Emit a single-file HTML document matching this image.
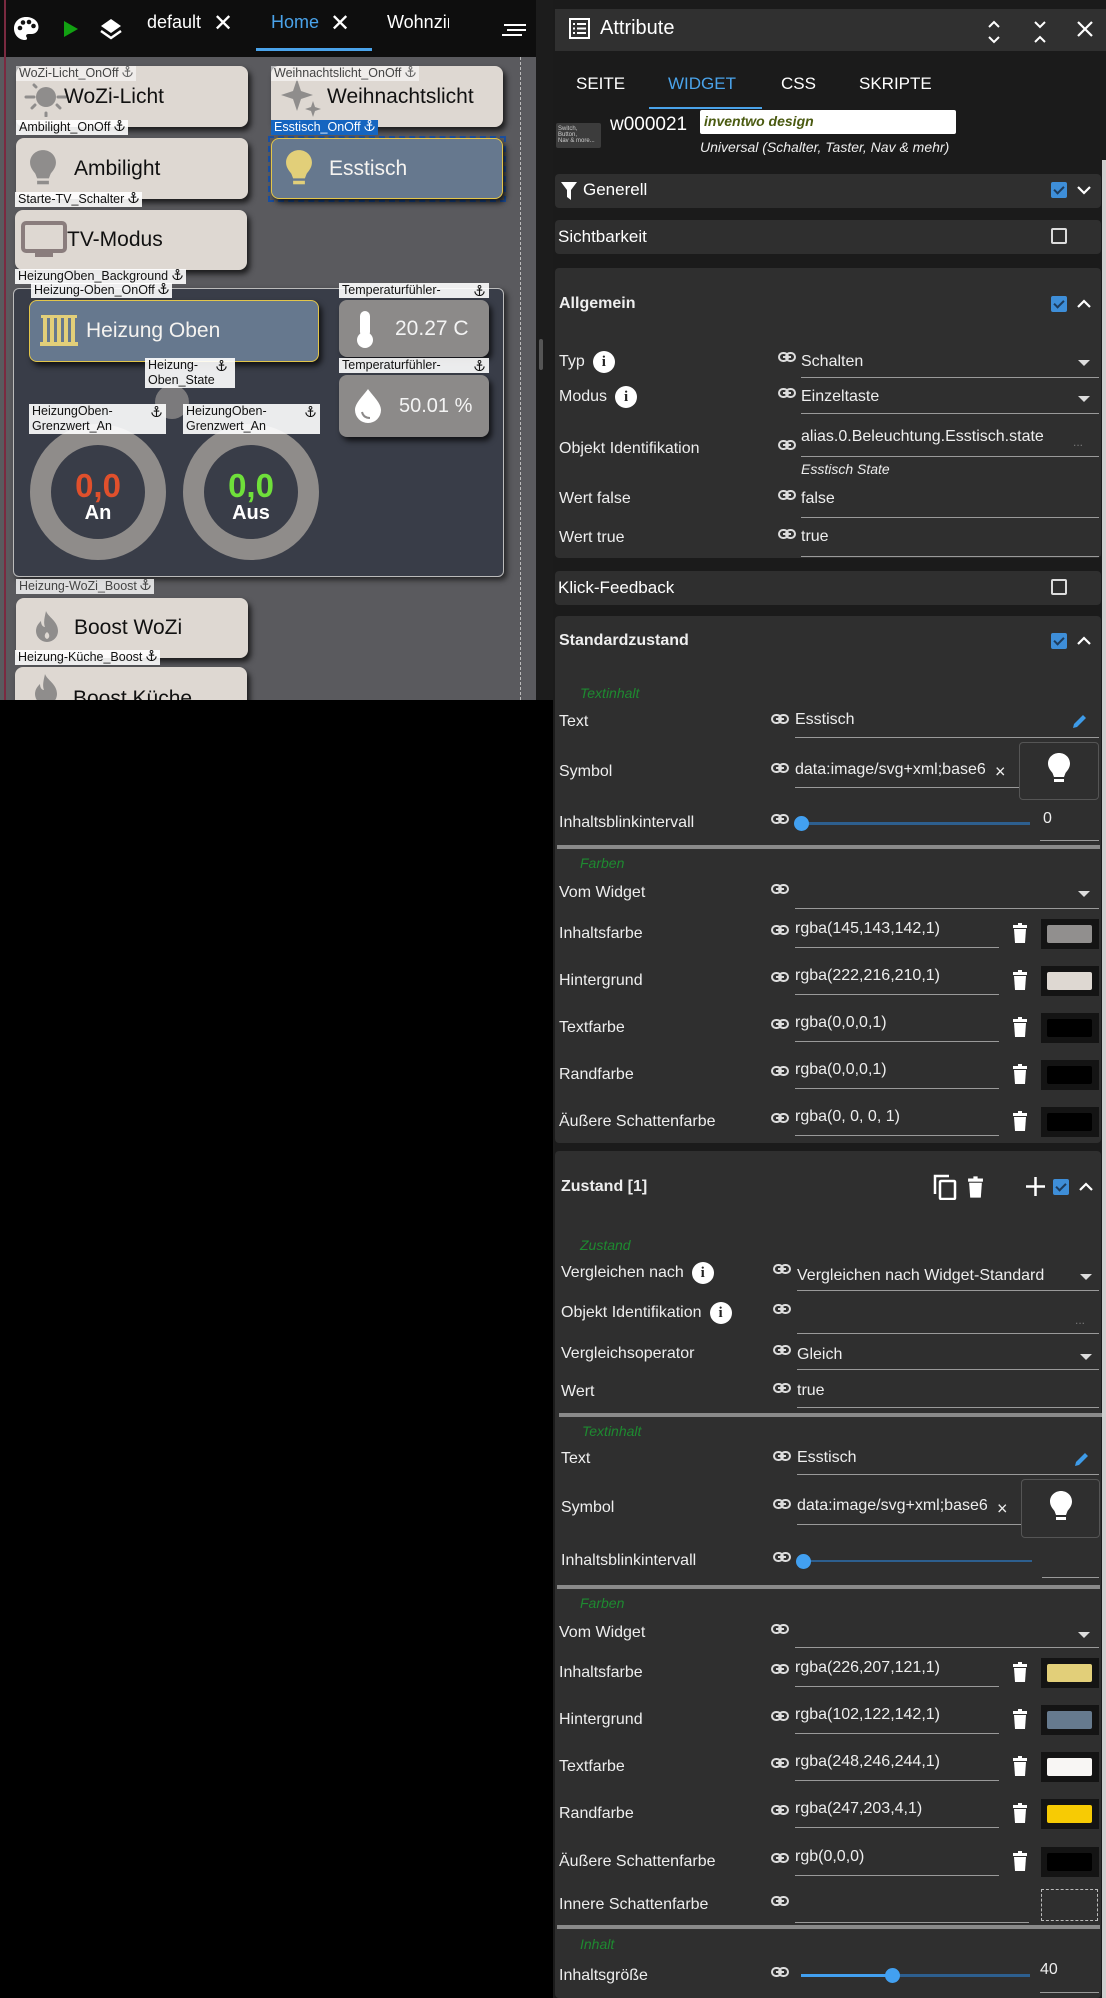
<!DOCTYPE html>
<html><head><meta charset="utf-8">
<style>
*{margin:0;padding:0;box-sizing:border-box}
body{width:1106px;height:1998px;background:#000;position:relative;overflow:hidden;font-family:"Liberation Sans",sans-serif;color:#fff}
.a{position:absolute}
.btn{position:absolute;background:#ded8d2;border-radius:8px;box-shadow:3px 4px 6px rgba(0,0,0,.7);color:#111;font-size:21px;display:flex;align-items:center}
.lbl{position:absolute;background:rgba(255,255,255,.9);color:#111;font-size:12.5px;line-height:15px;padding:0 3px;white-space:nowrap}
.lbl.t{background:rgba(255,255,255,.55);color:#444}
.blk{position:absolute;left:555px;width:546px;background:#2f2f2f;border-radius:4px}
.L{position:absolute;left:559px;font-size:16px;color:#eee;transform:translateY(-50%);white-space:nowrap}
.V{position:absolute;font-size:16px;color:#eee;transform:translateY(-50%);white-space:nowrap}
.ul{position:absolute;height:1px;background:#9a9a9a}
.lk{position:absolute;width:18px;height:10px}
.ar{position:absolute;left:1078px;width:0;height:0;border-left:6px solid transparent;border-right:6px solid transparent;border-top:6px solid #ddd}
.cb{position:absolute;width:16px;height:16px;background:#3e8ed8;border-radius:2px}
.cb:after{content:"";position:absolute;left:5px;top:2px;width:4px;height:8px;border:solid #1d3b5c;border-width:0 2px 2px 0;transform:rotate(45deg)}
.cbe{position:absolute;width:16px;height:16px;border:2px solid #ddd;border-radius:2px}
.grn{position:absolute;left:580px;font-size:14px;font-style:italic;color:#1e8a30;transform:translateY(-50%)}
.sep{position:absolute;left:557px;width:543px;height:4px;background:#8a8a8a}
.info{display:inline-block;width:22px;height:22px;border-radius:50%;background:#fff;color:#222;font-weight:bold;font-size:15px;text-align:center;line-height:22px;vertical-align:middle;margin-left:8px;font-family:"Liberation Serif",serif}
.sw{position:absolute;left:1041px;width:58px;height:30px;background:#141414}
.sw i{position:absolute;left:6px;top:6px;width:45px;height:18px;border-radius:2px}
.tr{position:absolute;left:1012px;width:16px;height:20px}
.h{font-weight:bold;font-size:16px}
</style></head><body>
<svg width="0" height="0" style="position:absolute"><defs>
<symbol id="lnk" viewBox="0 0 18 10"><rect x="1" y="1" width="9" height="8" rx="4" fill="none" stroke="#ddd" stroke-width="2"/><rect x="8" y="1" width="9" height="8" rx="4" fill="none" stroke="#ddd" stroke-width="2"/><rect x="5" y="4" width="8" height="2" fill="#ddd"/></symbol>
<symbol id="trash" viewBox="0 0 16 20"><rect x="1" y="2" width="14" height="3" fill="#fff"/><rect x="6" y="0" width="4" height="2" fill="#fff"/><path d="M2 6h12l-1 14H3z" fill="#fff"/></symbol>
<symbol id="bulb" viewBox="0 0 24 34"><path d="M12 1C6 1 1 5.5 1 11.5c0 4 2.5 7 4.5 9.5L7 25h10l1.5-4c2-2.5 4.5-5.5 4.5-9.5C23 5.5 18 1 12 1z"/><rect x="7" y="27" width="10" height="3"/></symbol>
<symbol id="anc" viewBox="0 0 12 12"><circle cx="6" cy="2" r="1.5" fill="none" stroke="currentColor"/><path d="M6 3.5v8M3 5.5h6M1 7c0 3 3 4.5 5 4.5s5-1.5 5-4.5" fill="none" stroke="currentColor" stroke-width="1.2"/></symbol>
</defs></svg>

<!-- LEFT EDITOR -->
<div class="a" style="left:0;top:0;width:536px;height:700px;background:#5a5a5e"></div>
<div class="a" style="left:0;top:0;width:536px;height:57px;background:#0e0e0e"></div>
<div class="a" style="left:4px;top:0;width:2px;height:700px;background:#7a2a40"></div>
<div class="a" style="left:536px;top:0;width:17px;height:700px;background:#1c1c1c"></div>
<div class="a" style="left:539px;top:339px;width:4px;height:31px;background:#555;border-radius:2px"></div>
<div class="a" style="left:520px;top:57px;width:0;height:643px;border-left:1px dashed #bbb"></div>
<svg class="a" style="left:13px;top:16px" width="27" height="25" viewBox="0 0 27 25"><path d="M13 1C6 1 1 6 1 12.5S6 24 12 24c2 0 2.5-1.5 1.5-3-1-1.5 0-3 2-3h3c4 0 7-3 7-7C25.5 5 20 1 13 1z" fill="#fff"/><circle cx="7" cy="12" r="2.3" fill="#111"/><circle cx="10" cy="6.5" r="2.3" fill="#111"/><circle cx="16" cy="6" r="2.3" fill="#111"/><circle cx="20.5" cy="10" r="2.3" fill="#111"/></svg>
<div class="a" style="left:64px;top:21px;border-left:14px solid #12a012;border-top:8px solid transparent;border-bottom:8px solid transparent"></div>
<svg class="a" style="left:99px;top:17px" width="24" height="24" viewBox="0 0 24 24"><path d="M12 2L2 9l10 7 10-7z" fill="#fff"/><path d="M2 14l10 7 10-7" fill="none" stroke="#fff" stroke-width="2.5"/></svg>
<div class="a" style="left:147px;top:12px;font-size:18px;color:#fff">default</div>
<div class="a" style="left:213px;top:9px;font-size:24px;color:#fff">✕</div>
<div class="a" style="left:271px;top:12px;font-size:18px;color:#4aa3ea">Home</div>
<div class="a" style="left:330px;top:9px;font-size:24px;color:#fff">✕</div>
<div class="a" style="left:256px;top:48px;width:116px;height:3px;background:#4aa3ea"></div>
<div class="a" style="left:387px;top:12px;font-size:18px;color:#fff;width:62px;overflow:hidden;white-space:nowrap">Wohnzimmer</div>
<div class="a" style="left:504px;top:24px;width:22px;height:2px;background:#fff"></div>
<div class="a" style="left:507px;top:29px;width:19px;height:2px;background:#fff"></div>
<div class="a" style="left:502px;top:34px;width:20px;height:2px;background:#fff"></div>

<div class="btn" style="left:16px;top:66px;width:232px;height:61px"><svg style="margin-left:6px" width="48" height="40" viewBox="0 0 48 40"><circle cx="24" cy="20" r="10" fill="#8f8d8c"/><g stroke="#8f8d8c" stroke-width="3" stroke-linecap="round"><path d="M4 20h8M36 20h8M24 36v3M10 31l3-3M38 31l-3-3M12 8l2 2"/></g></svg><span style="margin-left:-6px">WoZi-Licht</span></div>
<div class="btn" style="left:271px;top:66px;width:232px;height:61px"><svg style="margin-left:6px" width="48" height="44" viewBox="0 0 48 44"><path d="M20 4l4 12 12 4-12 4-4 12-4-12-12-4 12-4z" fill="#8f8d8c"/><path d="M36 26l2 6 6 2-6 2-2 6-2-6-6-2 6-2z" fill="#8f8d8c"/></svg><span style="margin-left:2px">Weihnachtslicht</span></div>
<div class="lbl t" style="left:16px;top:66px">WoZi-Licht_OnOff <svg width="11" height="11" style="color:#666"><use href="#anc"/></svg></div>
<div class="lbl t" style="left:271px;top:66px">Weihnachtslicht_OnOff <svg width="11" height="11" style="color:#666"><use href="#anc"/></svg></div>

<div class="btn" style="left:16px;top:138px;width:232px;height:61px"><svg style="margin-left:12px;fill:#8f8d8c" width="30" height="40"><use href="#bulb"/></svg><span style="margin-left:16px">Ambilight</span></div>
<div class="lbl" style="left:16px;top:120px">Ambilight_OnOff <svg width="11" height="11"><use href="#anc"/></svg></div>
<div class="a" style="left:268px;top:136px;width:238px;height:66px;border:2px dashed #1a4fa0"></div>
<div class="btn" style="left:271px;top:138px;width:232px;height:61px;background:#66788e;border:1px solid #e3c64a;color:#f5f3f0"><svg style="margin-left:12px;fill:#e2cf79" width="30" height="40"><use href="#bulb"/></svg><span style="margin-left:15px">Esstisch</span></div>
<div class="lbl" style="left:271px;top:120px;background:#1565c0;color:#fff">Esstisch_OnOff <svg width="11" height="11"><use href="#anc"/></svg></div>

<div class="btn" style="left:15px;top:210px;width:232px;height:60px"><svg style="margin-left:6px" width="46" height="38" viewBox="0 0 46 38"><rect x="2" y="2" width="42" height="28" rx="3" fill="none" stroke="#8a7d7d" stroke-width="4"/><rect x="14" y="31" width="18" height="5" fill="#8a7d7d"/></svg><span>TV-Modus</span></div>
<div class="lbl" style="left:15px;top:192px">Starte-TV_Schalter <svg width="11" height="11"><use href="#anc"/></svg></div>

<div class="a" style="left:13px;top:288px;width:491px;height:289px;background:#393d48;border:1px solid #bbb;border-radius:6px;box-shadow:3px 3px 6px rgba(0,0,0,.6)"></div>
<div class="lbl" style="left:15px;top:269px">HeizungOben_Background <svg width="11" height="11"><use href="#anc"/></svg></div>
<div class="btn" style="left:29px;top:300px;width:290px;height:62px;background:#66788e;border:1px solid #e3c64a;color:#f5f3f0"><svg style="margin-left:10px" width="38" height="38" viewBox="0 0 38 38"><g fill="#e2cf79"><rect x="3" y="4" width="4" height="28"/><rect x="10" y="4" width="4" height="28"/><rect x="17" y="4" width="4" height="28"/><rect x="24" y="4" width="4" height="28"/><rect x="31" y="4" width="4" height="28"/><rect x="0" y="30" width="38" height="4"/><rect x="1" y="3" width="36" height="3"/></g></svg><span style="margin-left:8px">Heizung Oben</span></div>
<div class="lbl" style="left:31px;top:283px">Heizung-Oben_OnOff <svg width="11" height="11"><use href="#anc"/></svg></div>

<div class="btn" style="left:339px;top:300px;width:150px;height:57px;background:#8c8a89;color:#f4f4f4;font-size:21px"><svg style="margin-left:16px" width="20" height="40" viewBox="0 0 20 40"><rect x="5" y="2" width="10" height="26" rx="5" fill="#fff"/><circle cx="10" cy="31" r="8" fill="#fff"/></svg><span style="margin-left:20px">20.27 C</span></div>
<div class="lbl" style="left:339px;top:283px;width:150px">Temperaturfühler- <svg width="11" height="11" style="position:absolute;right:4px;top:2px"><use href="#anc"/></svg></div>
<div class="btn" style="left:339px;top:375px;width:150px;height:62px;background:#8c8a89;color:#f4f4f4;font-size:20px"><svg style="margin-left:14px" width="30" height="36" viewBox="0 0 30 36"><path d="M15 1C10 8 2 15 2 22a13 13 0 0 0 26 0C28 15 20 8 15 1z" fill="#fff"/><path d="M9 24c1 4 4 6 8 6" stroke="#8c8a89" stroke-width="2" fill="none"/></svg><span style="margin-left:16px">50.01 %</span></div>
<div class="lbl" style="left:339px;top:358px;width:150px">Temperaturfühler- <svg width="11" height="11" style="position:absolute;right:4px;top:2px"><use href="#anc"/></svg></div>
<div class="a" style="left:155px;top:385px;width:34px;height:34px;border-radius:50%;background:#8c8a89;opacity:.8"></div>
<div class="lbl" style="left:145px;top:358px;width:90px;height:30px;white-space:normal">Heizung-<br>Oben_State<svg width="11" height="11" style="position:absolute;right:8px;top:2px"><use href="#anc"/></svg></div>

<div class="a" style="left:30px;top:424px;width:136px;height:136px;border-radius:50%;border:21px solid #8f8c8a;background:#393d48"></div>
<div class="a" style="left:183px;top:424px;width:136px;height:136px;border-radius:50%;border:21px solid #8f8c8a;background:#393d48"></div>
<div class="a" style="left:30px;top:470px;width:136px;text-align:center;font-weight:bold;font-size:33px;color:#e0502c;line-height:32px">0,0</div>
<div class="a" style="left:30px;top:502px;width:136px;text-align:center;font-weight:bold;font-size:20px;color:#fff">An</div>
<div class="a" style="left:183px;top:470px;width:136px;text-align:center;font-weight:bold;font-size:33px;color:#6fe03a;line-height:32px">0,0</div>
<div class="a" style="left:183px;top:502px;width:136px;text-align:center;font-weight:bold;font-size:20px;color:#fff">Aus</div>
<div class="lbl" style="left:29px;top:404px;width:137px;height:30px;white-space:normal">HeizungOben-<br>Grenzwert_An<svg width="11" height="11" style="position:absolute;right:4px;top:2px"><use href="#anc"/></svg></div>
<div class="lbl" style="left:183px;top:404px;width:137px;height:30px;white-space:normal">HeizungOben-<br>Grenzwert_An<svg width="11" height="11" style="position:absolute;right:4px;top:2px"><use href="#anc"/></svg></div>

<div class="btn" style="left:16px;top:598px;width:232px;height:60px"><svg style="margin-left:14px" width="34" height="36" viewBox="0 0 34 36"><path d="M16 1c2 6 12 10 12 20a11 11 0 0 1-22 0c0-5 3-8 5-10 0 4 2 6 4 6-2-5 0-11 1-16z" fill="#8f8d8c"/><path d="M17 22c-3 2-3 6 0 7 3-1 3-5 0-7z" fill="#ded8d2"/></svg><span style="margin-left:10px">Boost WoZi</span></div>
<div class="lbl t" style="left:16px;top:579px;background:rgba(255,255,255,.8)">Heizung-WoZi_Boost <svg width="11" height="11"><use href="#anc"/></svg></div>
<div class="btn" style="left:15px;top:667px;width:232px;height:60px;align-items:flex-start"><svg style="margin-left:14px;margin-top:6px" width="34" height="36" viewBox="0 0 34 36"><path d="M16 1c2 6 12 10 12 20a11 11 0 0 1-22 0c0-5 3-8 5-10 0 4 2 6 4 6-2-5 0-11 1-16z" fill="#8f8d8c"/></svg><span style="margin-left:10px;margin-top:20px">Boost Küche</span></div>
<div class="lbl" style="left:15px;top:650px">Heizung-Küche_Boost <svg width="11" height="11"><use href="#anc"/></svg></div>
<div class="a" style="left:0;top:700px;width:553px;height:1298px;background:#000"></div>

<!-- RIGHT PANEL -->
<div class="a" style="left:553px;top:0;width:553px;height:1998px;background:#1b1b1b"></div>
<div class="a" style="left:555px;top:9px;width:551px;height:42px;background:#303030"></div>
<svg class="a" style="left:569px;top:18px" width="21" height="21" viewBox="0 0 21 21"><rect x="1" y="1" width="19" height="19" fill="none" stroke="#fff" stroke-width="2"/><g fill="#fff"><rect x="4" y="5" width="2" height="2"/><rect x="8" y="5" width="9" height="2"/><rect x="4" y="9.5" width="2" height="2"/><rect x="8" y="9.5" width="9" height="2"/><rect x="4" y="14" width="2" height="2"/><rect x="8" y="14" width="9" height="2"/></g></svg>
<div class="a" style="left:600px;top:17px;font-size:20px">Attribute</div>
<svg class="a" style="left:987px;top:19px" width="14" height="26" viewBox="0 0 14 26"><path d="M2 8l5-5 5 5M2 18l5 5 5-5" fill="none" stroke="#fff" stroke-width="2"/></svg>
<svg class="a" style="left:1033px;top:19px" width="14" height="26" viewBox="0 0 14 26"><path d="M2 3l5 5 5-5M2 23l5-5 5 5" fill="none" stroke="#fff" stroke-width="2"/></svg>
<svg class="a" style="left:1076px;top:20px" width="18" height="18" viewBox="0 0 18 18"><path d="M2 2l14 14M16 2L2 16" stroke="#fff" stroke-width="2.2"/></svg>

<div class="a" style="left:576px;top:74px;font-size:17px">SEITE</div>
<div class="a" style="left:668px;top:74px;font-size:17px;color:#4aa3ea">WIDGET</div>
<div class="a" style="left:781px;top:74px;font-size:17px">CSS</div>
<div class="a" style="left:859px;top:74px;font-size:17px">SKRIPTE</div>
<div class="a" style="left:649px;top:107px;width:113px;height:2px;background:#4aa3ea"></div>
<div class="a" style="left:556px;top:123px;width:45px;height:25px;background:#3c3c3c;border-radius:2px;font-size:6px;line-height:6px;padding:3px 2px;color:#ccc">Switch,<br>Button,<br>Nav &amp; more...</div>
<div class="a" style="left:610px;top:114px;font-size:19px">w000021</div>
<div class="a" style="left:700px;top:110px;width:256px;height:24px;background:#fff;border-radius:2px;color:#4a5a10;font-style:italic;font-weight:bold;font-size:14px;padding:3px 4px">inventwo design</div>
<div class="a" style="left:700px;top:139px;font-size:14px;font-style:italic;color:#eee">Universal (Schalter, Taster, Nav &amp; mehr)</div>
<div class="a" style="left:1102px;top:160px;width:4px;height:1838px;background:#cfcfcf"></div>

<div class="blk" style="top:174px;height:34px"></div>
<svg class="a" style="left:561px;top:182px" width="16" height="18" viewBox="0 0 16 18"><path d="M0 0h16L10 8v10l-4-3V8z" fill="#fff"/></svg>
<div class="a" style="left:583px;top:180px;font-size:17px">Generell</div>
<div class="cb" style="left:1051px;top:182px"></div>
<svg class="a" style="left:1077px;top:185px" width="14" height="10" viewBox="0 0 14 10"><path d="M1 2l6 6 6-6" fill="none" stroke="#fff" stroke-width="2.2"/></svg>

<div class="blk" style="top:220px;height:34px"></div>
<div class="a" style="left:558px;top:227px;font-size:17px">Sichtbarkeit</div>
<div class="cbe" style="left:1051px;top:228px"></div>

<div class="blk" style="top:268px;height:290px"></div>
<div class="L h" style="top:304px">Allgemein</div>
<div class="cb" style="left:1051px;top:296px"></div>
<svg class="a" style="left:1077px;top:299px" width="14" height="10" viewBox="0 0 14 10"><path d="M1 8l6-6 6 6" fill="none" stroke="#fff" stroke-width="2.2"/></svg>
<div class="L" style="top:362px">Typ<span class="info">i</span></div>
<svg class="lk" style="left:778px;top:352px"><use href="#lnk"/></svg>
<div class="V" style="left:801px;top:362px">Schalten</div><div class="ar" style="top:360px"></div>
<div class="ul" style="left:801px;top:377px;width:298px"></div>
<div class="L" style="top:397px">Modus<span class="info">i</span></div>
<svg class="lk" style="left:778px;top:388px"><use href="#lnk"/></svg>
<div class="V" style="left:801px;top:397px">Einzeltaste</div><div class="ar" style="top:396px"></div>
<div class="ul" style="left:801px;top:413px;width:298px"></div>
<div class="L" style="top:449px">Objekt Identifikation</div>
<svg class="lk" style="left:778px;top:440px"><use href="#lnk"/></svg>
<div class="V" style="left:801px;top:437px">alias.0.Beleuchtung.Esstisch.state</div>
<div class="V" style="left:1073px;top:442px;color:#777;font-size:12px">...</div>
<div class="ul" style="left:801px;top:456px;width:298px"></div>
<div class="V" style="left:801px;top:469px;font-style:italic;font-size:14px">Esstisch State</div>
<div class="L" style="top:499px">Wert false</div>
<svg class="lk" style="left:778px;top:490px"><use href="#lnk"/></svg>
<div class="V" style="left:801px;top:499px">false</div>
<div class="ul" style="left:801px;top:517px;width:298px"></div>
<div class="L" style="top:538px">Wert true</div>
<svg class="lk" style="left:778px;top:529px"><use href="#lnk"/></svg>
<div class="V" style="left:801px;top:537px">true</div>
<div class="ul" style="left:801px;top:556px;width:298px"></div>

<div class="blk" style="top:571px;height:34px"></div>
<div class="a" style="left:558px;top:578px;font-size:17px">Klick-Feedback</div>
<div class="cbe" style="left:1051px;top:579px"></div>

<div class="blk" style="top:616px;height:527px"></div>
<div class="L h" style="top:641px">Standardzustand</div>
<div class="cb" style="left:1051px;top:633px"></div>
<svg class="a" style="left:1077px;top:636px" width="14" height="10" viewBox="0 0 14 10"><path d="M1 8l6-6 6 6" fill="none" stroke="#fff" stroke-width="2.2"/></svg>
<div class="grn" style="top:693px">Textinhalt</div>
<div class="L" style="top:722px">Text</div>
<svg class="lk" style="left:771px;top:714px"><use href="#lnk"/></svg>
<div class="V" style="left:795px;top:720px">Esstisch</div>
<svg class="a" style="left:1072px;top:713px" width="16" height="16" viewBox="0 0 16 16"><path d="M1 15l1-4 9-9 3 3-9 9z M12 1l3 3" fill="#3e9be8"/></svg>
<div class="ul" style="left:795px;top:737px;width:304px"></div>
<div class="L" style="top:772px">Symbol</div>
<svg class="lk" style="left:771px;top:763px"><use href="#lnk"/></svg>
<div class="V" style="left:795px;top:770px;width:190px;overflow:hidden">data:image/svg+xml;base64,PHN2</div>
<div class="V" style="left:995px;top:772px;font-size:18px">×</div>
<div class="ul" style="left:795px;top:787px;width:224px"></div>
<div class="a" style="left:1019px;top:742px;width:80px;height:58px;border:1px solid #555;border-radius:4px"></div>
<svg class="a" style="left:1047px;top:752px;fill:#fff" width="24" height="34"><use href="#bulb"/></svg>
<div class="L" style="top:823px">Inhaltsblinkintervall</div>
<svg class="lk" style="left:771px;top:814px"><use href="#lnk"/></svg>
<div class="a" style="left:801px;top:822px;width:229px;height:3px;background:#2d5f8f"></div>
<div class="a" style="left:794px;top:816px;width:15px;height:15px;border-radius:50%;background:#42a0f0"></div>
<div class="V" style="left:1043px;top:819px">0</div>
<div class="ul" style="left:1040px;top:840px;width:59px"></div>
<div class="sep" style="top:845px"></div>
<div class="grn" style="top:863px">Farben</div>
<div class="L" style="top:893px">Vom Widget</div>
<svg class="lk" style="left:771px;top:884px"><use href="#lnk"/></svg>
<div class="ar" style="top:891px"></div>
<div class="ul" style="left:795px;top:908px;width:304px"></div>

<div class="L" style="top:934px">Inhaltsfarbe</div><svg class="lk" style="left:771px;top:925px"><use href="#lnk"/></svg><div class="V" style="left:795px;top:929px">rgba(145,143,142,1)</div><div class="ul" style="left:795px;top:947px;width:204px"></div><svg class="tr" style="top:923px"><use href="#trash"/></svg><div class="sw" style="top:919px"><i style="background:#918f8e"></i></div>
<div class="L" style="top:981px">Hintergrund</div><svg class="lk" style="left:771px;top:972px"><use href="#lnk"/></svg><div class="V" style="left:795px;top:976px">rgba(222,216,210,1)</div><div class="ul" style="left:795px;top:994px;width:204px"></div><svg class="tr" style="top:970px"><use href="#trash"/></svg><div class="sw" style="top:966px"><i style="background:#ded8d2"></i></div>
<div class="L" style="top:1028px">Textfarbe</div><svg class="lk" style="left:771px;top:1019px"><use href="#lnk"/></svg><div class="V" style="left:795px;top:1023px">rgba(0,0,0,1)</div><div class="ul" style="left:795px;top:1041px;width:204px"></div><svg class="tr" style="top:1017px"><use href="#trash"/></svg><div class="sw" style="top:1013px"><i style="background:#000"></i></div>
<div class="L" style="top:1075px">Randfarbe</div><svg class="lk" style="left:771px;top:1066px"><use href="#lnk"/></svg><div class="V" style="left:795px;top:1070px">rgba(0,0,0,1)</div><div class="ul" style="left:795px;top:1088px;width:204px"></div><svg class="tr" style="top:1064px"><use href="#trash"/></svg><div class="sw" style="top:1060px"><i style="background:#000"></i></div>
<div class="L" style="top:1122px">Äußere Schattenfarbe</div><svg class="lk" style="left:771px;top:1113px"><use href="#lnk"/></svg><div class="V" style="left:795px;top:1117px">rgba(0, 0, 0, 1)</div><div class="ul" style="left:795px;top:1135px;width:204px"></div><svg class="tr" style="top:1111px"><use href="#trash"/></svg><div class="sw" style="top:1107px"><i style="background:#000"></i></div>

<div class="blk" style="top:1151px;height:847px"></div>
<div class="L h" style="left:561px;top:1187px">Zustand [1]</div>
<svg class="a" style="left:933px;top:1174px" width="24" height="26" viewBox="0 0 24 26"><path d="M2 20V2h14" fill="none" stroke="#fff" stroke-width="2.5"/><rect x="7" y="7" width="15" height="18" rx="1" fill="none" stroke="#fff" stroke-width="2.5"/></svg>
<svg class="a" style="left:967px;top:1176px" width="17" height="22"><use href="#trash"/></svg>
<svg class="a" style="left:1026px;top:1177px" width="19" height="19" viewBox="0 0 19 19"><path d="M9.5 0v19M0 9.5h19" stroke="#fff" stroke-width="2.5"/></svg>
<div class="cb" style="left:1053px;top:1179px"></div>
<svg class="a" style="left:1079px;top:1182px" width="14" height="10" viewBox="0 0 14 10"><path d="M1 8l6-6 6 6" fill="none" stroke="#fff" stroke-width="2.2"/></svg>
<div class="grn" style="top:1245px">Zustand</div>
<div class="L" style="left:561px;top:1273px">Vergleichen nach<span class="info">i</span></div>
<svg class="lk" style="left:773px;top:1264px"><use href="#lnk"/></svg>
<div class="V" style="left:797px;top:1276px">Vergleichen nach Widget-Standard</div><div class="ar" style="top:1274px;left:1080px"></div>
<div class="ul" style="left:797px;top:1290px;width:302px"></div>
<div class="L" style="left:561px;top:1313px">Objekt Identifikation<span class="info">i</span></div>
<svg class="lk" style="left:773px;top:1304px"><use href="#lnk"/></svg>
<div class="V" style="left:1075px;top:1320px;color:#777;font-size:12px">...</div>
<div class="ul" style="left:797px;top:1333px;width:302px"></div>
<div class="L" style="left:561px;top:1354px">Vergleichsoperator</div>
<svg class="lk" style="left:773px;top:1345px"><use href="#lnk"/></svg>
<div class="V" style="left:797px;top:1355px">Gleich</div><div class="ar" style="top:1354px;left:1080px"></div>
<div class="ul" style="left:797px;top:1369px;width:302px"></div>
<div class="L" style="left:561px;top:1392px">Wert</div>
<svg class="lk" style="left:773px;top:1383px"><use href="#lnk"/></svg>
<div class="V" style="left:797px;top:1391px">true</div>
<div class="ul" style="left:797px;top:1407px;width:302px"></div>
<div class="sep" style="top:1413px;left:559px"></div>
<div class="grn" style="left:582px;top:1431px">Textinhalt</div>
<div class="L" style="left:561px;top:1459px">Text</div>
<svg class="lk" style="left:773px;top:1451px"><use href="#lnk"/></svg>
<div class="V" style="left:797px;top:1458px">Esstisch</div>
<svg class="a" style="left:1074px;top:1451px" width="16" height="16" viewBox="0 0 16 16"><path d="M1 15l1-4 9-9 3 3-9 9z M12 1l3 3" fill="#3e9be8"/></svg>
<div class="ul" style="left:797px;top:1474px;width:302px"></div>
<div class="L" style="left:561px;top:1508px">Symbol</div>
<svg class="lk" style="left:773px;top:1499px"><use href="#lnk"/></svg>
<div class="V" style="left:797px;top:1506px;width:190px;overflow:hidden">data:image/svg+xml;base64,PHN2</div>
<div class="V" style="left:997px;top:1509px;font-size:18px">×</div>
<div class="ul" style="left:797px;top:1524px;width:224px"></div>
<div class="a" style="left:1021px;top:1479px;width:79px;height:59px;border:1px solid #555;border-radius:4px"></div>
<svg class="a" style="left:1049px;top:1490px;fill:#fff" width="24" height="34"><use href="#bulb"/></svg>
<div class="L" style="left:561px;top:1561px">Inhaltsblinkintervall</div>
<svg class="lk" style="left:773px;top:1552px"><use href="#lnk"/></svg>
<div class="a" style="left:803px;top:1560px;width:229px;height:2px;background:#2d5f8f"></div>
<div class="a" style="left:796px;top:1554px;width:15px;height:15px;border-radius:50%;background:#42a0f0"></div>
<div class="ul" style="left:1042px;top:1577px;width:57px"></div>
<div class="sep" style="top:1585px"></div>
<div class="grn" style="top:1603px">Farben</div>
<div class="L" style="top:1633px">Vom Widget</div>
<svg class="lk" style="left:771px;top:1624px"><use href="#lnk"/></svg>
<div class="ar" style="top:1632px"></div>
<div class="ul" style="left:795px;top:1647px;width:304px"></div>

<div class="L" style="top:1673px">Inhaltsfarbe</div><svg class="lk" style="left:771px;top:1664px"><use href="#lnk"/></svg><div class="V" style="left:795px;top:1668px">rgba(226,207,121,1)</div><div class="ul" style="left:795px;top:1686px;width:204px"></div><svg class="tr" style="top:1662px"><use href="#trash"/></svg><div class="sw" style="top:1658px"><i style="background:#e2cf79"></i></div>
<div class="L" style="top:1720px">Hintergrund</div><svg class="lk" style="left:771px;top:1711px"><use href="#lnk"/></svg><div class="V" style="left:795px;top:1715px">rgba(102,122,142,1)</div><div class="ul" style="left:795px;top:1733px;width:204px"></div><svg class="tr" style="top:1709px"><use href="#trash"/></svg><div class="sw" style="top:1705px"><i style="background:#667a8e"></i></div>
<div class="L" style="top:1767px">Textfarbe</div><svg class="lk" style="left:771px;top:1758px"><use href="#lnk"/></svg><div class="V" style="left:795px;top:1762px">rgba(248,246,244,1)</div><div class="ul" style="left:795px;top:1780px;width:204px"></div><svg class="tr" style="top:1756px"><use href="#trash"/></svg><div class="sw" style="top:1752px"><i style="background:#f8f6f4"></i></div>
<div class="L" style="top:1814px">Randfarbe</div><svg class="lk" style="left:771px;top:1805px"><use href="#lnk"/></svg><div class="V" style="left:795px;top:1809px">rgba(247,203,4,1)</div><div class="ul" style="left:795px;top:1827px;width:204px"></div><svg class="tr" style="top:1803px"><use href="#trash"/></svg><div class="sw" style="top:1799px"><i style="background:#f7cb04"></i></div>
<div class="L" style="top:1862px">Äußere Schattenfarbe</div><svg class="lk" style="left:771px;top:1853px"><use href="#lnk"/></svg><div class="V" style="left:795px;top:1857px">rgb(0,0,0)</div><div class="ul" style="left:795px;top:1875px;width:204px"></div><svg class="tr" style="top:1851px"><use href="#trash"/></svg><div class="sw" style="top:1847px"><i style="background:#000"></i></div>
<div class="L" style="top:1905px">Innere Schattenfarbe</div><svg class="lk" style="left:771px;top:1896px"><use href="#lnk"/></svg>
<div class="ul" style="left:795px;top:1922px;width:234px"></div>
<div class="a" style="left:1041px;top:1889px;width:57px;height:32px;border:1px dashed #bbb"></div>
<div class="sep" style="top:1925px"></div>
<div class="grn" style="top:1944px">Inhalt</div>
<div class="L" style="top:1976px">Inhaltsgröße</div>
<svg class="lk" style="left:771px;top:1967px"><use href="#lnk"/></svg>
<div class="a" style="left:801px;top:1974px;width:229px;height:3px;background:#2d5f8f"></div>
<div class="a" style="left:801px;top:1974px;width:91px;height:3px;background:#42a0f0"></div>
<div class="a" style="left:885px;top:1968px;width:15px;height:15px;border-radius:50%;background:#42a0f0"></div>
<div class="V" style="left:1040px;top:1970px">40</div>
<div class="ul" style="left:1040px;top:1992px;width:59px"></div>
</body></html>
